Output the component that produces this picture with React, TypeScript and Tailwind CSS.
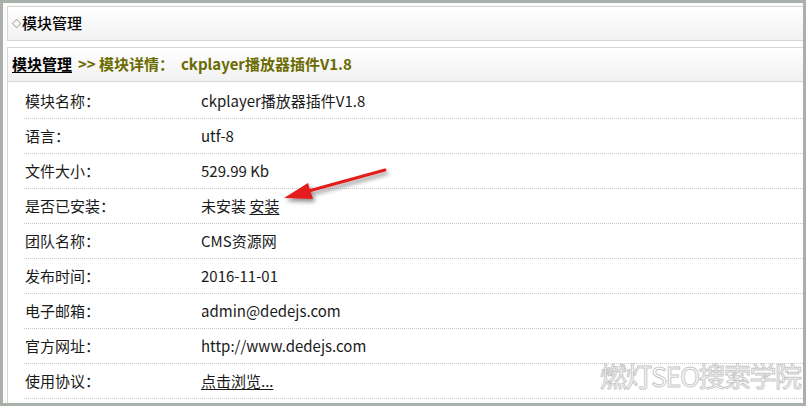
import React from 'react';

type Row = { label: string; value: React.ReactNode };

const rows: Row[] = [
  { label: '模块名称：', value: 'ckplayer播放器插件V1.8' },
  { label: '语言：', value: 'utf-8' },
  { label: '文件大小：', value: '529.99 Kb' },
  {
    label: '是否已安装：',
    value: (
      <>
        未安装 <span className="underline underline-offset-2">安装</span>
      </>
    ),
  },
  { label: '团队名称：', value: 'CMS资源网' },
  { label: '发布时间：', value: '2016-11-01' },
  { label: '电子邮箱：', value: 'admin@dedejs.com' },
  { label: '官方网址：', value: 'http://www.dedejs.com' },
  { label: '使用协议：', value: <span className="underline underline-offset-2">点击浏览...</span> },
];

const App: React.FC = () => {
  return (
    <div
      className="relative w-[806px] h-[406px] overflow-hidden bg-[#a9afa9] pt-[3px] pl-[3px] pr-[3px] pb-[3px] text-[15px] text-[#1a1a1a]"
      style={{ fontFamily: '"Noto Sans CJK SC", "Noto Sans", sans-serif' }}
    >
      <div className="h-full bg-[#fbfbfb] pt-[3px] pl-[4px] flex flex-col">
        {/* top bar */}
        <div className="h-[35px] shrink-0 border border-r-0 border-[#d6d6d6] bg-gradient-to-b from-white to-[#f1f1f1] flex items-center pl-[4px] text-black">
          <span className="text-[9px] text-[#333] mr-[1px]">◇</span>
          <span className="font-medium">模块管理</span>
        </div>

        <div className="h-[6px] shrink-0 bg-white" />

        {/* detail panel */}
        <div className="flex-1 border border-r-0 border-b-0 border-[#d6d6d6] bg-white flex flex-col">
          <div className="h-[34px] shrink-0 border-b border-[#d6d6d6] bg-gradient-to-b from-white to-[#f1f1f1] flex items-center pl-[4px] font-bold">
            <span className="text-black underline underline-offset-2">模块管理</span>
            <span className="ml-[6px] text-[#6b6b00]">&gt;&gt; 模块详情：&nbsp;&nbsp;ckplayer播放器插件V1.8</span>
          </div>
          <div className="pl-[16px] pt-[2px]">
            {rows.map((r) => (
              <div
                key={r.label}
                className="h-[35px] flex items-center border-b border-dotted border-[#c8c8c8]"
              >
                <div className="w-[177px] pl-[1px]">{r.label}</div>
                <div>{r.value}</div>
              </div>
            ))}
          </div>
        </div>
      </div>

      {/* arrow annotation */}
      <svg className="absolute left-[270px] top-[160px]" width="130" height="50" viewBox="0 0 130 50">
        <defs>
          <filter id="sh" x="-20%" y="-50%" width="140%" height="200%">
            <feDropShadow dx="2" dy="3" stdDeviation="2" floodColor="#000" floodOpacity="0.45" />
          </filter>
        </defs>
        <g filter="url(#sh)">
          <line x1="115" y1="10" x2="35" y2="32" stroke="#e31b1b" strokeWidth="3" strokeLinecap="round" />
          <polygon points="14,38 38,23 43,39" fill="#e31b1b" />
        </g>
      </svg>

      {/* watermark */}
      <div className="absolute left-[600px] top-[362px] text-[27px] leading-none tracking-[-1.5px] text-white/70 [-webkit-text-stroke:1px_#c8c8c8] whitespace-nowrap">
        燃灯SEO搜索学院
      </div>
    </div>
  );
};

export default App;
